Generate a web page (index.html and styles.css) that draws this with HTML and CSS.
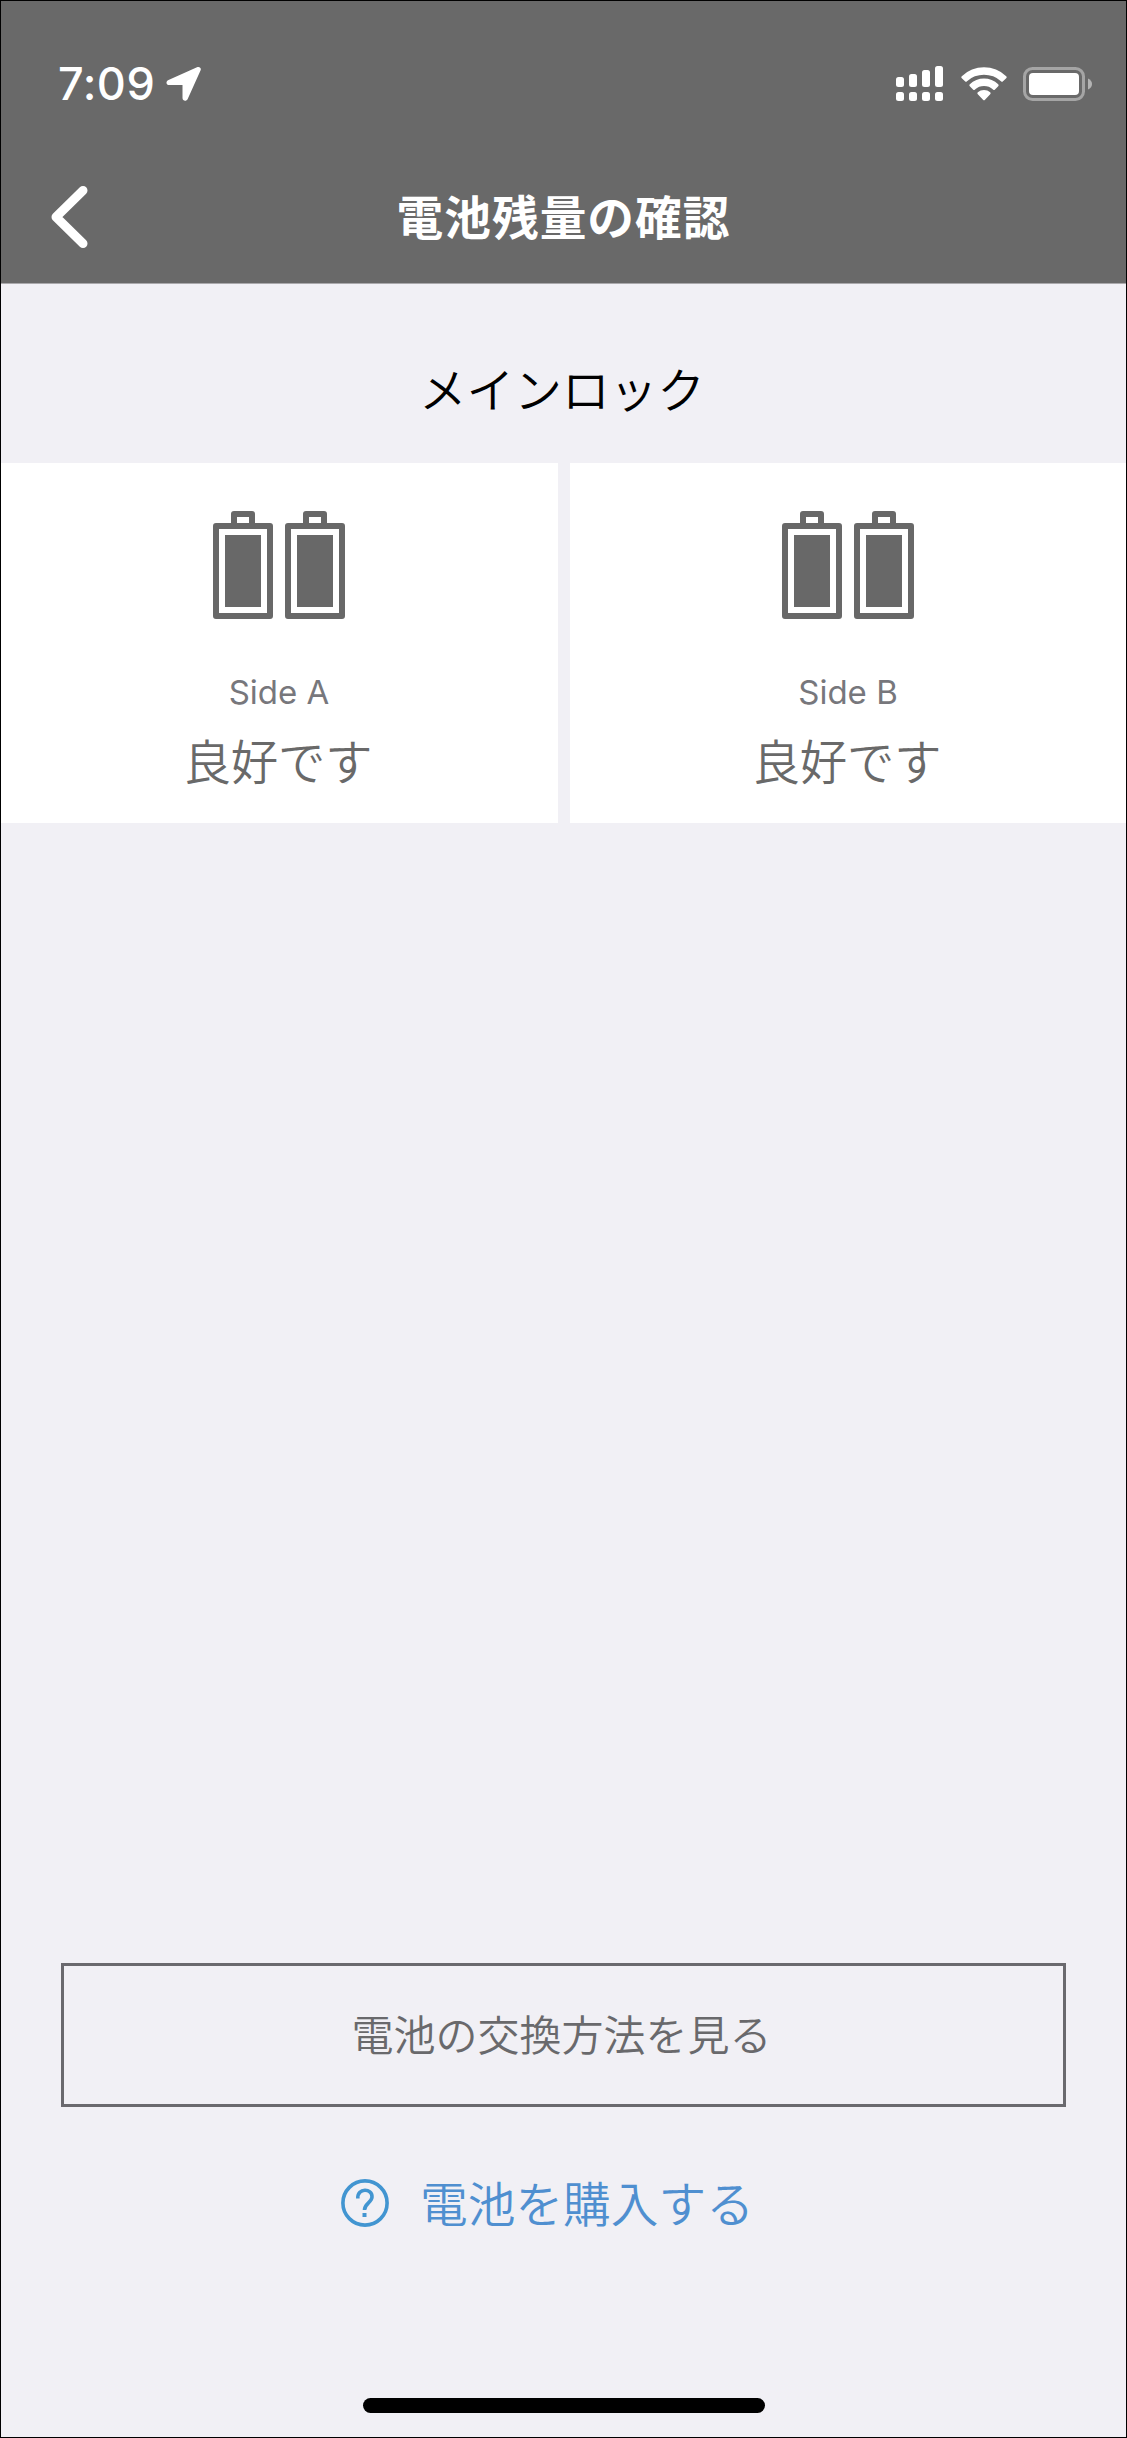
FILE: index.html
```html
<!DOCTYPE html>
<html lang="ja">
<head>
<meta charset="utf-8">
<title>電池残量の確認</title>
<link rel="stylesheet" href="styles.css">
</head>
<body>
<div class="screen">
  <header class="header">
    <div class="status-bar">
      <div class="status-left">
        <span class="time">7:09</span>
        <svg class="location" width="36" height="36" viewBox="0 0 36 36"><path d="M2.500 14 31 1.200c2.600-1 4.600.8 3.500 3.400L21.700 33c-1.200 2.800-5.200 2.200-5.200-1V19H3.500C0 19-.6 15.400 2.500 14Z" fill="#fff"/></svg>
      </div>
      <div class="status-right">
        <svg width="47" height="35" viewBox="0 0 47 35" fill="#fff">
          <rect x="0" y="11" width="8" height="10" rx="2.500"/><rect x="13" y="8" width="8" height="13" rx="2.500"/><rect x="26" y="4" width="8" height="17" rx="2.500"/><rect x="39" y="0" width="8" height="21" rx="2.500"/>
          <rect x="0" y="26" width="8" height="9" rx="2.500"/><rect x="13" y="26" width="8" height="9" rx="2.500"/><rect x="26" y="26" width="8" height="9" rx="2.500"/><rect x="39" y="26" width="8" height="9" rx="2.500"/>
        </svg>
        <svg class="wifi" width="46" height="34" viewBox="0 0 46 34" fill="#fff">
          <path d="M.8 9.200a32 32 0 0 1 44.400 0q1 1 0 2L42 14.300q-1 1-2 0a25 25 0 0 0-34 0q-1 1-2 0L.8 11.200q-1-1 0-2Z"/>
          <path d="M8.800 17.300a20.500 20.500 0 0 1 28.400 0q1 1 0 2L34 22.500q-1 1-2 0a13.500 13.500 0 0 0-18 0q-1 1-2 0l-3.200-3.200q-1-1 0-2Z"/>
          <path d="M16.800 25.300a9.500 9.500 0 0 1 12.400 0q1 1 0 2L24 32.700q-1 1-2 0l-5.200-5.400q-1-1 0-2Z"/>
        </svg>
        <svg class="charge" width="70" height="34" viewBox="0 0 70 34">
          <rect x="1.500" y="1.500" width="59" height="31" rx="8" fill="none" stroke="#fff" stroke-opacity=".4" stroke-width="3"/>
          <rect x="6" y="6" width="50" height="22" rx="4" fill="#fff"/>
          <path d="M65 11.500q4 2 4 5.500t-4 5.500Z" fill="#fff" fill-opacity=".5"/>
        </svg>
      </div>
    </div>
    <div class="nav">
      <svg class="back" width="38" height="62" viewBox="0 0 38 62"><path d="M33 4.500 6 31 33 57.500" fill="none" stroke="#fff" stroke-width="9" stroke-linecap="round" stroke-linejoin="round"/></svg>
      <h1 class="title">電池残量の確認</h1>
    </div>
  </header>
  <h2 class="lock-name">メインロック</h2>
  <section class="cards">
    <div class="card">
      <svg width="132" height="108" viewBox="0 0 132 108" fill="none" stroke="#686868" stroke-width="6" stroke-linejoin="round">
        <path d="M3 15h54v90H3ZM21 15V3h18v12M75 15h54v90H75ZM93 15V3h18v12"/>
        <path d="M12 24h36v72H12ZM84 24h36v72H84Z" fill="#686868" stroke="none"/>
      </svg>
      <div class="side">Side A</div>
      <div class="state">良好です</div>
    </div>
    <div class="card">
      <svg width="132" height="108" viewBox="0 0 132 108" fill="none" stroke="#686868" stroke-width="6" stroke-linejoin="round">
        <path d="M3 15h54v90H3ZM21 15V3h18v12M75 15h54v90H75ZM93 15V3h18v12"/>
        <path d="M12 24h36v72H12ZM84 24h36v72H84Z" fill="#686868" stroke="none"/>
      </svg>
      <div class="side">Side B</div>
      <div class="state">良好です</div>
    </div>
  </section>
  <footer class="actions">
    <div class="button">電池の交換方法を見る</div>
    <div class="link">
      <svg width="48" height="48" viewBox="0 0 48 48" fill="none" stroke="#4295d1" stroke-width="3.600">
        <circle cx="24" cy="24" r="22.100"/>
        <path d="M16.800 19.500C16.300 8.500 31.300 9 31 18 30.800 23.500 23.500 24.500 23.500 31"/>
        <path d="M21.500 34h4v4h-4Z" fill="#4295d1" stroke="none"/>
      </svg>
      <span class="link-text">電池を購入する</span>
    </div>
    <div class="home-indicator"></div>
  </footer>
</div>
</body>
</html>
```
FILE: styles.css
```css
* { box-sizing: border-box; }

body {
  margin: 0;
  background: #f1f0f5;
  font-family: "Noto Sans CJK JP DemiLight", "Noto Sans CJK JP", sans-serif;
  font-weight: 350;
}

svg { display: block; flex: none; }

.screen {
  display: flex;
  flex-direction: column;
  width: 1127px;
  height: 2438px;
  border: 1px solid #000;
}

.header {
  height: 283px;
  background: #696969;
  border-bottom: 1px solid #aaa9ac;
  color: #fff;
}

.status-bar {
  display: flex;
  justify-content: space-between;
  align-items: center;
  height: 165px;
  padding: 0 33px 0 57px;
}

.status-left,
.status-right { display: flex; align-items: center; }

.time {
  width: 108px;
  font: 500 45px/48px Inter, sans-serif;
  letter-spacing: 0.5px;
  white-space: nowrap;
}

.wifi { margin-left: 18px; }
.charge { margin-left: 16px; }

.nav {
  display: grid;
  grid-template-columns: 38px 1fr 38px;
  align-items: center;
  height: 102px;
  padding: 0 49px;
}

.title {
  margin: 0;
  padding-bottom: 4px;
  font-family: "Noto Sans CJK JP", sans-serif;
  font-size: 46.7px;
  line-height: 60px;
  font-weight: 700;
  letter-spacing: 1px;
  text-align: center;
}

.lock-name {
  height: 179px;
  margin: 0;
  padding: 74px 3px 0 0;
  color: #000;
  font-size: 47.7px;
  font-weight: 350;
  line-height: 60px;
  text-align: center;
}

.cards {
  display: grid;
  grid-template-columns: 557px 556px;
  gap: 12px;
  height: 360px;
}

.card {
  display: flex;
  flex-direction: column;
  align-items: center;
  padding-top: 48px;
  background: #fff;
}

.card:first-child { padding-right: 1px; }

.side {
  margin-top: 53px;
  color: #77777c;
  font: 400 33px/40px Inter, sans-serif;
}

.state {
  margin-top: 18px;
  padding-right: 2px;
  color: #696969;
  font-size: 47.3px;
  line-height: 60px;
}

.actions { margin-top: auto; }

.button {
  width: 1005px;
  height: 144px;
  margin-left: 60px;
  padding-right: 4px;
  border: 3px solid #6a696e;
  color: #69696c;
  font-size: 42px;
  line-height: 134px;
  text-align: center;
}

.link {
  display: flex;
  align-items: center;
  height: 60px;
  margin: 66px 0 165px 340px;
}

.link-text {
  margin-left: 31px;
  padding-bottom: 3px;
  color: #4f8fd0;
  font-size: 47.7px;
  line-height: 57px;
}

.home-indicator {
  width: 402px;
  height: 15px;
  margin: 0 0 24px 362px;
  border-radius: 8px;
  background: #000;
}
```
